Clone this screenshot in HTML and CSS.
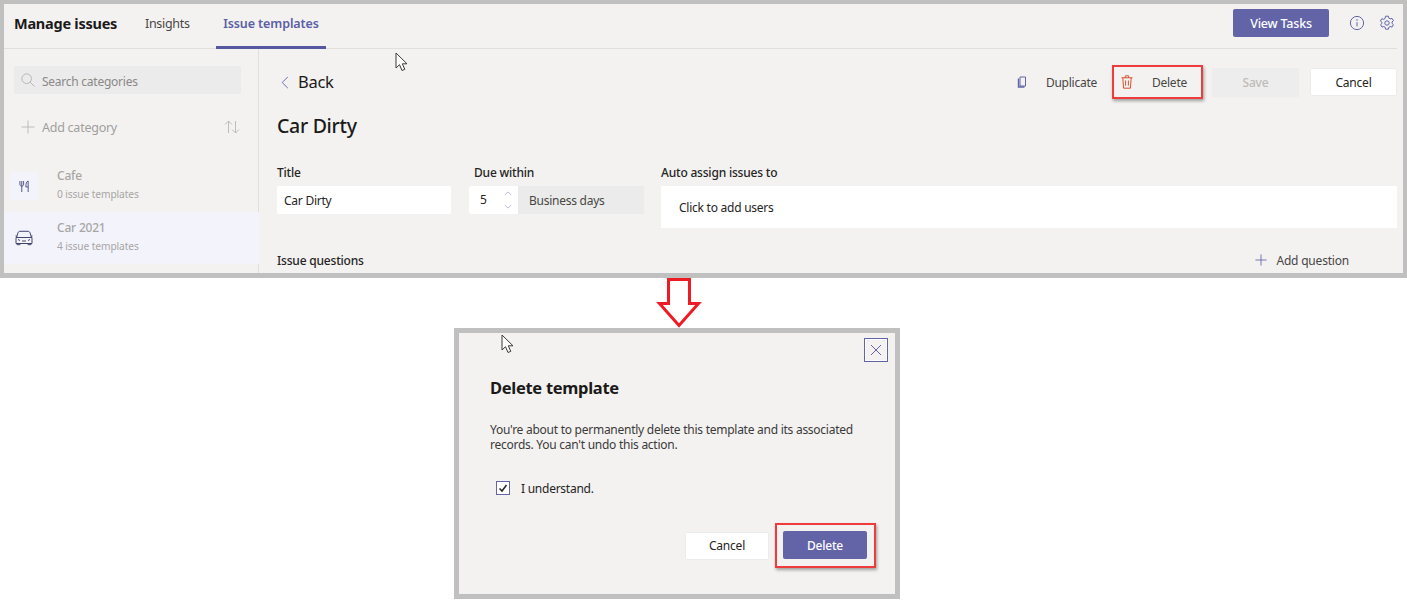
FILE: index.html
```html
<!DOCTYPE html>
<html lang="en">
<head>
<meta charset="utf-8">
<title>Manage issues</title>
<link rel="stylesheet" href="styles.css">
</head>
<body>
<section class="panel">
  <header class="top">
    <h1 class="brand">Manage issues</h1>
    <nav class="tabs">
      <a class="tab">Insights</a>
      <a class="tab active">Issue templates</a>
    </nav>
    <div class="top-right">
      <button class="btn primary view">View Tasks</button>
      <svg class="ico info" viewBox="0 0 16 16"><circle cx="8" cy="8" r="6.6"/><path d="M8 7.2v4.2"/><circle class="dot" cx="8" cy="5" r=".8"/></svg>
      <svg class="ico gear" viewBox="0 0 16 16"><path d="M6.6 1.2h2.800l.4 1.900 1.400.8 1.800-.6 1.400 2.400-1.400 1.300v1.400l1.400 1.300-1.400 2.400-1.800-.6-1.400.8-.4 1.900H6.600l-.4-1.900-1.400-.8-1.800.6-1.400-2.400 1.400-1.300V7.400L1.400 6.100l1.400-2.400 1.800.6 1.400-.8z"/><circle cx="8" cy="8" r="2.200"/></svg>
    </div>
  </header>
  <div class="content">
    <aside class="side">
      <div class="search">
        <svg class="ico s14" viewBox="0 0 16 16"><circle cx="6.500" cy="6.500" r="5.500"/><path d="M10.400 10.400l5 5"/></svg>
        <span class="search-text">Search categories</span>
      </div>
      <div class="add-cat">
        <svg class="ico s14" viewBox="0 0 14 14"><path d="M7 .5v13M.5 7h13"/></svg>
        <span class="grow">Add category</span>
        <svg class="ico sort" viewBox="0 0 16 14"><path d="M4.500 13V1M1 4.500L4.500 1 8 4.500M11.500 1v12M8 9.500l3.500 3.500L15 9.500"/></svg>
      </div>
      <ul class="cats">
        <li class="cat">
          <span class="cat-ico tile"><svg class="ico fork" viewBox="0 0 12 14"><path d="M1 1v3.500c0 1.500 1 2.200 2 2.200s2-.7 2-2.200V1M3 1v12M10 1v12M10 1C8 1.500 7.500 4 7.500 7.500H10"/></svg></span>
          <div class="cat-text"><p class="cat-name">Cafe</p><p class="cat-sub">0 issue templates</p></div>
        </li>
        <li class="cat selected">
          <span class="cat-ico"><svg class="ico car" viewBox="0 0 18 16"><path d="M1.500 7.500L3 2.800C3.300 1.800 4 1.300 5 1.300h8c1 0 1.700.5 2 1.500l1.500 4.700M1 7.500h16v6H1zM2 13.500v1.200h3v-1.200M13 13.500v1.200h3v-1.200M7 11h4M3 9.500l2 1M15 9.500l-2 1M.5 6h1.500M16 6h1.500"/></svg></span>
          <div class="cat-text"><p class="cat-name">Car 2021</p><p class="cat-sub">4 issue templates</p></div>
        </li>
      </ul>
    </aside>
    <main class="main">
      <div class="bar">
        <div class="back">
          <svg class="ico chev" viewBox="0 0 8 14"><path d="M7 1L1 7l6 6"/></svg>
          <span>Back</span>
        </div>
        <div class="actions">
          <div class="act dup">
            <svg class="ico copy" viewBox="0 0 10 12"><path d="M2.500 1h5.500v9H2.500z"/><path class="fill" d="M1 2.500v8.500h6"/></svg>
            <span>Duplicate</span>
          </div>
          <div class="act del hl">
            <svg class="ico trash" viewBox="0 0 12 14"><path d="M.5 2.800h11M4 2.800l.5-2h3l.5 2M1.800 2.800l.8 10.400h6.800l.8-10.400M4.600 5.500v5.200M7.400 5.500v5.200"/></svg>
            <span>Delete</span>
          </div>
          <button class="btn save">Save</button>
          <button class="btn plain cancel">Cancel</button>
        </div>
      </div>
      <h2 class="title">Car Dirty</h2>
      <div class="form">
        <div class="field">
          <label class="lbl">Title</label>
          <div class="input">Car Dirty</div>
        </div>
        <div class="field">
          <label class="lbl lbl-due">Due within</label>
          <div class="due">
            <div class="num"><span>5</span>
              <span class="spin">
                <svg class="ico sp" viewBox="0 0 10 6"><path d="M1 5l4-4 4 4"/></svg>
                <svg class="ico sp" viewBox="0 0 10 6"><path d="M1 1l4 4 4-4"/></svg>
              </span>
            </div>
            <div class="unit">Business days</div>
          </div>
        </div>
        <div class="field">
          <label class="lbl">Auto assign issues to</label>
          <div class="assign">Click to add users</div>
        </div>
      </div>
      <div class="questions">
        <span class="q-title">Issue questions</span>
        <span class="add-q">
          <svg class="ico plus" viewBox="0 0 14 14"><path d="M7 .5v13M.5 7h13"/></svg>
          Add question
        </span>
      </div>
    </main>
  </div>
  <svg class="cursor c-top" viewBox="0 0 14 20"><path d="M1 1v15l3.500-3.300L7 18.500l2.800-1.200-2.500-5.500H12z"/></svg>
</section>

<div class="arrow-row">
  <svg class="arrow" viewBox="0 0 46 50"><path d="M12.500 1.500v24H3.500L23 47.500 42.500 25.500H33.500V1.500z"/></svg>
</div>

<div class="dialog-row">
  <section class="dialog">
    <div class="dlg-head">
      <button class="close"><svg class="ico x" viewBox="0 0 12 12"><path d="M1 1l10 10M11 1L1 11"/></svg></button>
    </div>
    <h2 class="dlg-title">Delete template</h2>
    <p class="dlg-text">You're about to permanently delete this template and its associated records. You can't undo this action.</p>
    <div class="check-row">
      <span class="check"><svg viewBox="0 0 12 12"><path d="M2.500 6.500l2.500 2.500 4.500-6"/></svg></span>
      <span>I understand.</span>
    </div>
    <div class="dlg-actions">
      <button class="btn plain dlg-btn">Cancel</button>
      <div class="hl dlg-hl"><button class="btn primary dlg-btn">Delete</button></div>
    </div>
    <svg class="cursor c-dlg" viewBox="0 0 14 20"><path d="M1 1v15l3.500-3.300L7 18.500l2.800-1.200-2.500-5.500H12z"/></svg>
  </section>
</div>
</body>
</html>
```

FILE: styles.css
```css
* { box-sizing: border-box; }
html, body { margin: 0; padding: 0; background: #fff; }
body {
  width: 1407px;
  height: 606px;
  overflow: hidden;
  font-family: "Noto Sans", "Open Sans", sans-serif;
  font-size: 12px;
  color: #252423;
}
h1, h2, p, ul { margin: 0; padding: 0; }
ul { list-style: none; }
button { font: inherit; border: 0; padding: 0; }

.ico { fill: none; stroke: #6264a7; stroke-width: 1; display: block; flex: none; }
.dot { fill: #6264a7; stroke: none; }

.panel {
  position: relative;
  height: 278px;
  border: solid #c0c0c0;
  border-width: 4px 4px 5px 4px;
  background: #f3f2f1;
  overflow: hidden;
}
.top {
  display: flex;
  align-items: center;
  height: 45px;
  margin-right: 6px;
  border-bottom: 1px solid #e1dfdd;
}
.brand { font-size: 14.500px; font-weight: 700; color: #1b1a19; margin-left: 10px; width: 123px; letter-spacing: -.25px; position: relative; top: -3px; }
.tabs { display: flex; height: 45px; }
.tab { display: flex; align-items: center; padding: 0 0 6px 8px; width: 78px; color: #484644; font-size: 12.500px; letter-spacing: -.3px; }
.tab.active { justify-content: center; padding: 0 0 3px; width: 110px; margin-left: 1px; font-weight: 600; color: #5b5fa5; border-bottom: 3px solid #5558a0; height: 45px; letter-spacing: -.1px; }
.top-right { margin-left: auto; display: flex; align-items: center; padding-bottom: 6px; }
.btn { display: flex; align-items: center; justify-content: center; border-radius: 2px; font-weight: 400; font-size: 12px; letter-spacing: -.2px; }
.primary { background: #6264a7; color: #fff; font-weight: 500; }
.view { width: 96px; height: 28px; font-size: 12.500px; }
.info { width: 16px; height: 16px; margin-left: 20px; }
.gear { width: 16px; height: 16px; margin-left: 14px; margin-right: 2px; }

.content { display: flex; height: 224px; }
.side { width: 255px; flex: none; border-right: 1px solid #e1dfdd; padding-top: 17px; height: 100%; }
.search {
  display: flex; align-items: center; gap: 7px;
  height: 28px; width: 227px; margin-left: 10px; padding-left: 7px;
  background: #ebebeb; border-radius: 2px; color: #8a8886; font-size: 12px; letter-spacing: -.25px;
}
.search-text { padding-top: 3px; }
.search .ico { stroke: #b3b0ad; }
.s14 { width: 14px; height: 14px; }
.add-cat { display: flex; align-items: center; gap: 7px; margin: 19px 18px 0 17px; height: 28px; color: #a19f9d; font-size: 12.500px; letter-spacing: -.25px; }
.add-cat .ico { stroke: #bebbb8; }
.grow { flex: 1; }
.sort { width: 16px; height: 14px; }
.cats { margin-top: 19px; }
.cat { display: flex; align-items: center; height: 52px; padding-left: 6px; color: #a19f9d; }
.cat.selected { background: #f3f3fc; margin-right: -1px; position: relative; }
.cat-ico { width: 28px; height: 28px; display: flex; align-items: center; justify-content: center; margin-right: 19px; flex: none; }
.tile { background: #f3f3fc; border-radius: 3px; }
.fork { width: 11px; height: 13px; stroke: #4a4c86; }
.car { width: 18px; height: 16px; stroke: #44466f; }
.cat-text { padding-bottom: 2px; }
.cat-name { font-size: 12px; font-weight: 500; line-height: 16px; color: #a8a6a4; letter-spacing: -.2px; }
.cat-sub { font-size: 10.200px; line-height: 18px; margin-top: 1px; color: #a8a6a4; letter-spacing: -.1px; }

.main { flex: 1; padding: 18px 6px 0 18px; min-width: 0; }
.bar { display: flex; justify-content: space-between; align-items: center; height: 30px; }
.back { display: flex; align-items: center; gap: 9px; margin-left: 4px; font-size: 16.500px; line-height: 28px; color: #1b1a19; letter-spacing: -.3px; }
.chev { width: 8px; height: 13px; }
.actions { display: flex; align-items: center; font-size: 12px; letter-spacing: -.25px; color: #484644; }
.act { display: flex; align-items: center; }
.dup { gap: 18px; margin-right: 15px; }
.copy { width: 11px; height: 12px; }
.copy .fill { stroke-width: 1.400; }
.hl { border: 2px solid #ee3b3b; box-shadow: 1px 2px 3px rgba(0,0,0,.35); }
.del { width: 91px; height: 34px; gap: 19px; padding-left: 7px; margin-right: 9px; }
.trash { width: 12px; height: 14px; stroke: #d9502e; }
.save { width: 87px; height: 29px; background: #ededed; color: #bdbbb8; font-weight: 500; }
.plain { background: #fff; color: #252423; box-shadow: 0 0 0 1px #eceaea inset; }
.cancel { width: 87px; height: 28px; margin-left: 11px; }

.title { font-size: 19.500px; font-weight: 500; line-height: 28px; margin-top: 15px; color: #1b1a19; letter-spacing: -.3px; }
.form { display: grid; grid-template-columns: 174px 175px 1fr; column-gap: 18px; margin-top: 24px; }
.form .field:last-child { margin-left: -1px; }
.lbl { display: block; font-size: 12px; font-weight: 500; height: 18px; line-height: 18px; margin-bottom: 4px; color: #252423; letter-spacing: -.2px; }
.lbl-due { margin-left: 5px; }
.input { height: 28px; line-height: 30px; padding-left: 7px; background: #fff; border-radius: 2px; letter-spacing: -.25px; }
.due { display: flex; height: 28px; }
.num { width: 49px; background: #fff; border-radius: 3px 0 0 3px; display: flex; align-items: center; justify-content: space-between; padding: 0 6px 0 11px; line-height: 30px; }
.spin { display: flex; flex-direction: column; gap: 8px; }
.sp { width: 8px; height: 5px; stroke: #a8a9d0; }
.unit { flex: 1; background: #ebebeb; line-height: 30px; padding-left: 11px; color: #484644; letter-spacing: -.25px; }
.assign { height: 42px; line-height: 44px; padding-left: 18px; background: #fff; letter-spacing: -.25px; }
.questions { display: flex; justify-content: space-between; align-items: center; margin-top: 23px; padding-right: 48px; height: 18px; }
.q-title { font-weight: 500; letter-spacing: -.2px; }
.add-q { display: flex; align-items: center; gap: 9px; color: #484644; letter-spacing: -.2px; }
.plus { width: 12px; height: 12px; }

.cursor { position: absolute; width: 14px; height: 20px; fill: #fff; stroke: #3b3a39; stroke-width: 1; }
.c-top { left: 391px; top: 48px; }
.c-dlg { left: 42px; top: 1px; }

.arrow-row { height: 50px; padding-left: 656px; }
.arrow { display: block; width: 46px; height: 50px; fill: #fff; stroke: #ed1c24; stroke-width: 3; }

.dialog-row { padding-left: 454px; }
.dialog {
  position: relative;
  width: 446px; height: 271px;
  border: 5px solid #c0c0c0;
  background: #f3f2f1;
  padding: 5px 7px 0 31px;
}
.dlg-head { display: flex; justify-content: flex-end; }
.close { width: 24px; height: 24px; background: transparent; border: 1px solid #6264a7; box-shadow: 0 0 0 1px #fff inset; display: flex; align-items: center; justify-content: center; }
.x { width: 12px; height: 12px; }
.dlg-title { font-size: 16.500px; font-weight: 700; line-height: 24px; margin-top: 14px; color: #1b1a19; letter-spacing: -.3px; }
.dlg-text { font-size: 12px; line-height: 15px; margin-top: 22px; width: 385px; color: #3b3a39; letter-spacing: -.26px; }
.check-row { display: flex; align-items: center; gap: 11px; margin: 28px 0 0 6px; letter-spacing: -.25px; height: 16px; }
.check { width: 14px; height: 14px; border: 1px solid #6264a7; background: #fff; display: block; }
.check svg { display: block; width: 12px; height: 12px; fill: none; stroke: #252423; stroke-width: 1.500; }
.dlg-actions { display: flex; align-items: center; margin: 27px 20px 0 0; justify-content: flex-end; }
.dlg-btn { width: 84px; height: 28px; }
.dlg-hl { width: 101px; height: 45px; padding: 6px 7px 0 6px; margin: 0 -8px 0 6px; }
```
